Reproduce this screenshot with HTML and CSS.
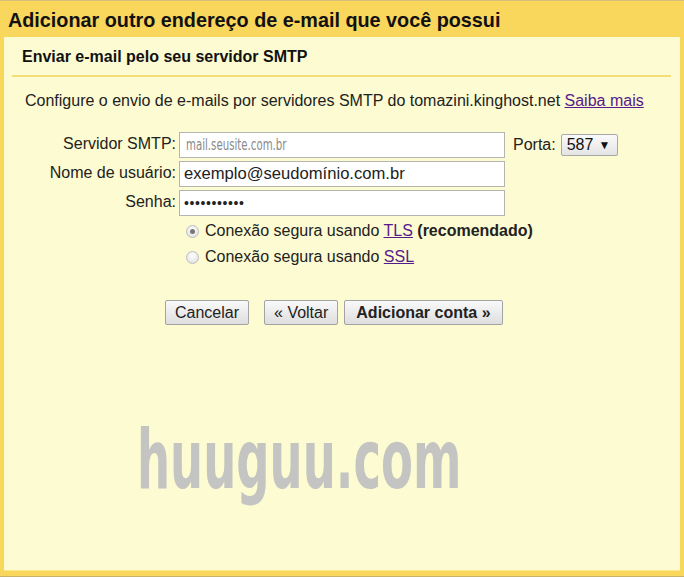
FILE: index.html
```html
<!DOCTYPE html>
<html lang="pt-BR">
<head>
<meta charset="utf-8">
<title>Adicionar outro endereço de e-mail</title>
<link rel="stylesheet" href="styles.css">
</head>
<body>
<div class="dialog">
  <div class="header">Adicionar outro endereço de e-mail que você possui</div>
  <div class="panel">
    <div class="subhead">Enviar e-mail pelo seu servidor SMTP</div>
    <p class="intro">Configure o envio de e-mails por servidores SMTP do tomazini.kinghost.net <a href="#">Saiba mais</a></p>
    <div class="form">
      <label class="lbl">Servidor SMTP:</label>
      <div class="field"><span class="placeholder">mail.seusite.com.br</span></div>
      <div class="port"><span>Porta:</span><span class="select">587 <span class="arrow">▼</span></span></div>
      <label class="lbl">Nome de usuário:</label>
      <div class="field"><span class="value">exemplo@seudomínio.com.br</span></div>
      <div></div>
      <label class="lbl">Senha:</label>
      <div class="field"><span class="dots">•••••••••••</span></div>
      <div></div>
    </div>
    <div class="radios">
      <div class="radio-row"><span class="radio checked"></span><span>Conexão segura usando <a href="#">TLS</a> <b>(recomendado)</b></span></div>
      <div class="radio-row"><span class="radio"></span><span>Conexão segura usando <a href="#">SSL</a></span></div>
    </div>
    <div class="buttons">
      <button class="btn">Cancelar</button>
      <button class="btn back">« Voltar</button>
      <button class="btn primary">Adicionar conta »</button>
    </div>
  </div>
  <div class="watermark">huuguu.com</div>
</div>
</body>
</html>
```
FILE: styles.css
```css
html, body {
  margin: 0;
  padding: 0;
}
body {
  width: 684px;
  height: 577px;
  overflow: hidden;
  font-family: "Liberation Sans", Arial, sans-serif;
  color: #222;
}
.dialog {
  position: relative;
  box-sizing: border-box;
  width: 684px;
  height: 577px;
  background: #f9d65c;
  border-top: 1px solid #d9c07a;
  border-bottom: 1px solid #c9b266;
  display: flex;
  flex-direction: column;
}
.header {
  height: 36px;
  line-height: 38px;
  padding-left: 8px;
  font-size: 19.8px;
  font-weight: bold;
  color: #111;
  flex: none;
  white-space: nowrap;
}
.panel {
  flex: 1;
  margin: 0 4px 5px 4px;
  background: #fdfbd1;
  border-bottom: 1px solid #fbe98a;
}
.subhead {
  margin: 0 9px 0 8px;
  padding-left: 10px;
  height: 38px;
  line-height: 40px;
  font-size: 16px;
  font-weight: bold;
  color: #111;
  border-bottom: 2px solid #f3df7a;
  white-space: nowrap;
}
.intro {
  margin: 15px 0 0 21px;
  font-size: 16px;
  line-height: 18px;
  color: #222;
  white-space: nowrap;
}
a {
  color: #551a8b;
  text-decoration: underline;
}
.form {
  margin-top: 22px;
  display: grid;
  grid-template-columns: 172px 326px auto;
  column-gap: 3px;
  row-gap: 3px;
  align-items: center;
}
.lbl {
  text-align: right;
  font-size: 16px;
  color: #222;
  align-self: start;
  padding-top: 3px;
  white-space: nowrap;
}
.field {
  box-sizing: border-box;
  height: 26px;
  background: #fff;
  border: 1px solid #b4b4b0;
  padding-left: 4px;
  display: flex;
  align-items: center;
  overflow: hidden;
  white-space: nowrap;
}
.placeholder {
  font-family: "DejaVu Sans", sans-serif;
  font-size: 15px;
  color: #8a8a8a;
  display: inline-block;
  transform: scaleX(0.68);
  transform-origin: left center;
  margin-left: 2px;
}
.value {
  font-size: 16.6px;
  color: #222;
}
.dots {
  font-size: 14px;
  color: #222;
  letter-spacing: 0.6px;
}
.port {
  display: flex;
  align-items: center;
  gap: 5px;
  margin-left: 5px;
  font-size: 16px;
  color: #222;
}
.select {
  box-sizing: border-box;
  width: 57px;
  height: 22px;
  padding: 0 5px;
  display: inline-flex;
  align-items: center;
  gap: 5px;
  border: 1px solid #a9a9a9;
  border-radius: 2px;
  background: linear-gradient(#fafafa, #e4e4e4);
  font-size: 16px;
  color: #111;
}
.arrow {
  font-size: 12px;
}
.radios {
  margin: 6px 0 0 182px;
  display: flex;
  flex-direction: column;
  gap: 8px;
  font-size: 16px;
  color: #222;
}
.radio-row {
  display: flex;
  align-items: center;
  gap: 6px;
  height: 18px;
}
.radio {
  box-sizing: border-box;
  width: 13px;
  height: 13px;
  border-radius: 50%;
  border: 1px solid #bdbdbd;
  background: radial-gradient(circle at 50% 35%, #ffffff, #dcdcdc);
  position: relative;
}
.radio.checked::after {
  content: "";
  position: absolute;
  left: 3px;
  top: 3px;
  width: 5px;
  height: 5px;
  border-radius: 50%;
  background: #777;
}
.buttons {
  margin: 34px 0 0 161px;
  display: flex;
}
.btn {
  box-sizing: border-box;
  height: 25px;
  padding: 0 9px;
  border: 1px solid #a3a3a3;
  border-radius: 2px;
  background: linear-gradient(#f9f9f9, #dedede);
  font-family: "Liberation Sans", Arial, sans-serif;
  font-size: 16px;
  color: #222;
}
.btn.back {
  margin-left: 15px;
}
.btn.primary {
  margin-left: 6px;
  padding: 0 11px;
  font-weight: bold;
}
.watermark {
  position: absolute;
  left: 137px;
  top: 414px;
  font-family: "DejaVu Sans", sans-serif;
  font-weight: bold;
  font-size: 82px;
  line-height: 90px;
  color: #c4c4c2;
  transform: scaleX(0.567);
  transform-origin: left top;
  white-space: nowrap;
}
```
